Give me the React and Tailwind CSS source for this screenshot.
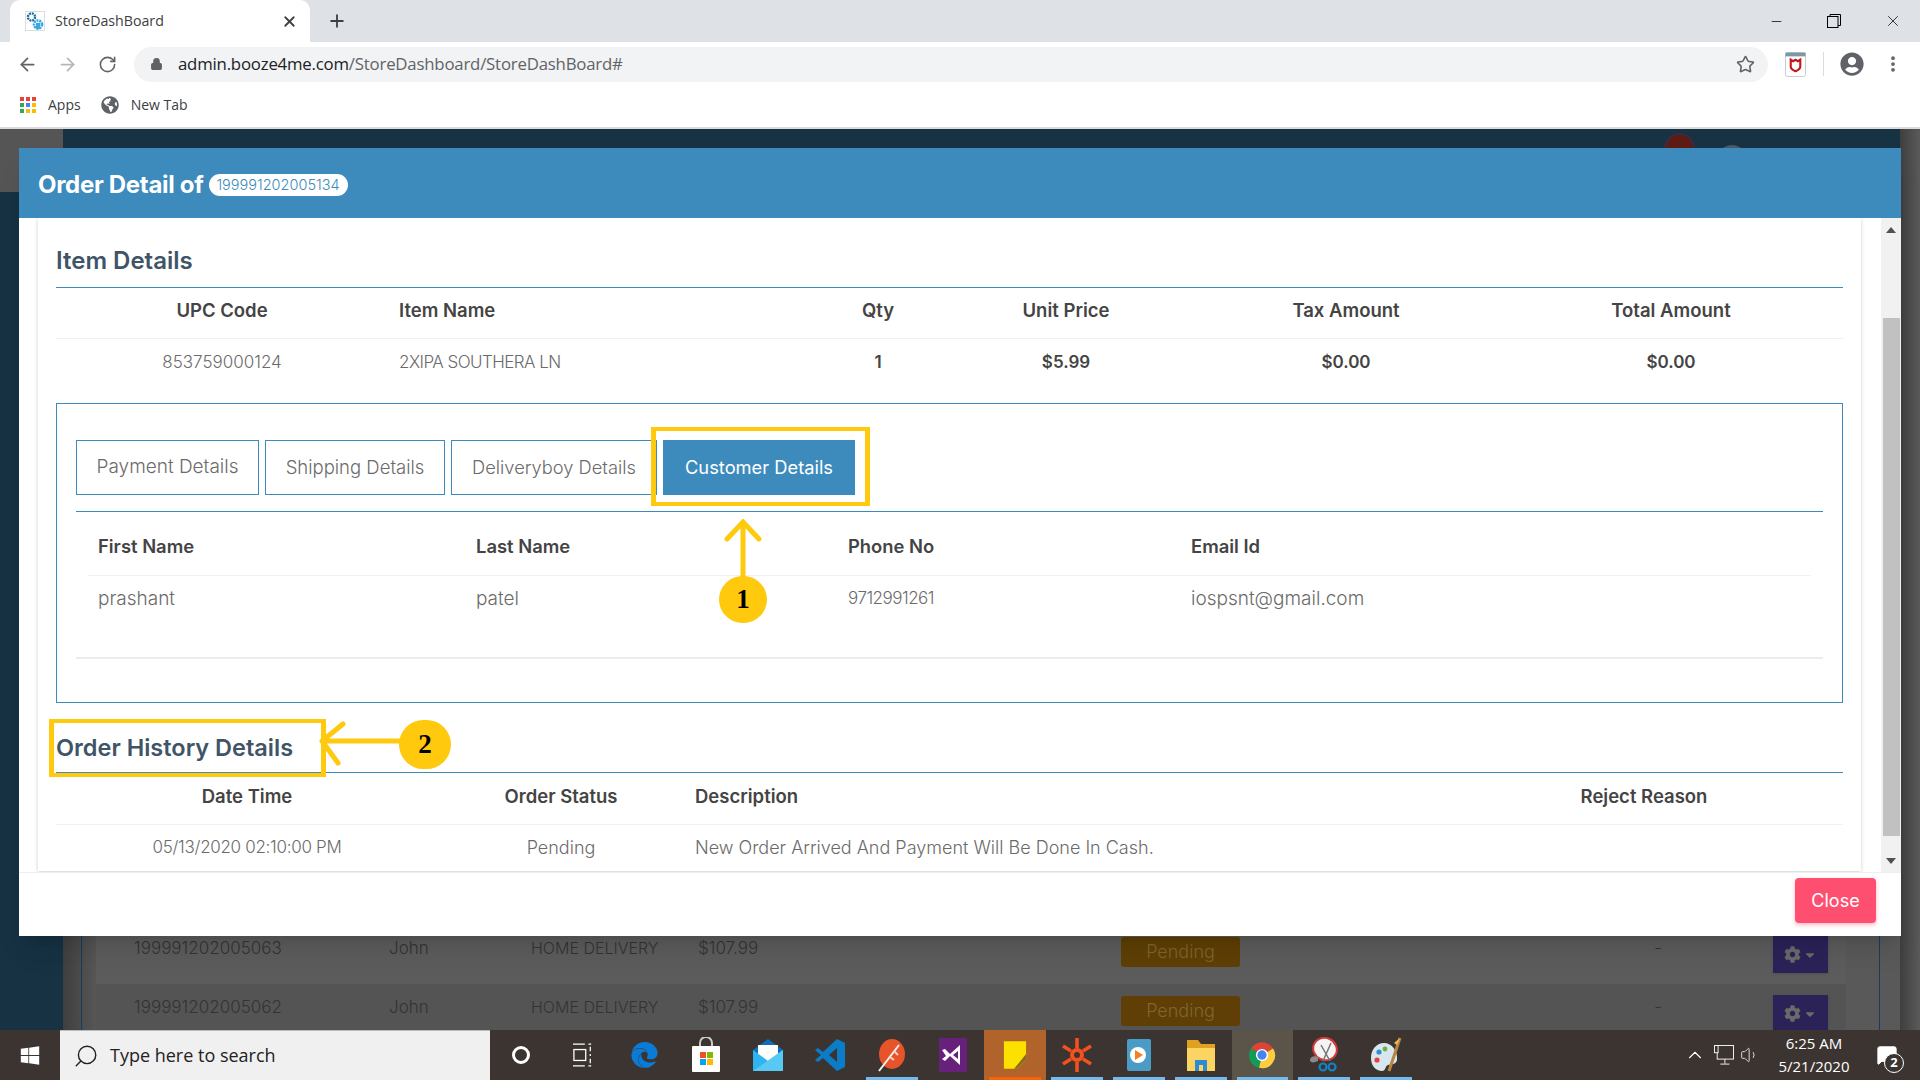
import React from 'react';
import { ArrowLeft, ArrowRight, RotateCw, Lock, Star, EllipsisVertical, X, Plus, Minus, Search, ChevronUp, Volume1, MessageSquare } from 'lucide-react';
import { FaGlobeAmericas, FaUserCircle, FaWindows, FaCog, FaCaretDown, FaEdge } from 'react-icons/fa';

const Favicon = () => (
  <svg viewBox="0 0 20 20" className="w-5 h-5 shrink-0">
    <rect x="0.5" y="0.5" width="19" height="19" fill="#fff" stroke="#ddd" />
    <circle cx="6.5" cy="6" r="3.6" fill="none" stroke="#1f6f9f" strokeWidth="2.4" strokeDasharray="2 0.8" />
    <circle cx="13" cy="13.5" r="4" fill="none" stroke="#38a8e0" strokeWidth="2.6" strokeDasharray="2 0.8" />
    <rect x="11" y="12" width="4" height="6" fill="#38a8e0" />
  </svg>
);

const AppsIcon = () => {
  const colors = ['#ea4335', '#ea4335', '#ea4335', '#34a853', '#4285f4', '#fbbc05', '#34a853', '#fbbc05', '#fbbc05'];
  return (
    <svg viewBox="0 0 16 16" className="w-4 h-4 shrink-0">
      {colors.map((c, i) => (
        <rect key={i} x={(i % 3) * 6} y={Math.floor(i / 3) * 6} width="4" height="4" fill={c} />
      ))}
    </svg>
  );
};

const RestoreIcon = () => (
  <svg viewBox="0 0 14 14" className="w-[14px] h-[14px]" fill="none" stroke="#000" strokeWidth="1">
    <rect x="0.5" y="2.5" width="10.5" height="11" />
    <path d="M3 2.5V0.5H13.5V11.5H11" />
  </svg>
);

const McAfee = () => (
  <svg viewBox="0 0 22 26" className="w-[21px] h-[25px]">
    <rect x="0.5" y="0.5" width="21" height="25" rx="2" fill="#fff" stroke="#c4c9cd" />
    <rect x="0.5" y="0.5" width="21" height="4" fill="#7b98a8" />
    <path d="M6 8l2.5 1.5L11 8l2.5 1.5L16 8v7c0 2.5-2.5 4-5 5-2.5-1-5-2.5-5-5z" fill="none" stroke="#c01818" strokeWidth="2.2" />
  </svg>
);

const StoreIcon = () => (
  <svg viewBox="0 0 30 36" className="w-[30px] h-[36px]">
    <path d="M9 10V6a6 6 0 0 1 12 0v4" fill="none" stroke="#ccc" strokeWidth="2" />
    <rect x="1" y="9" width="28" height="26" rx="1" fill="#fff" />
    <rect x="9" y="15" width="6" height="6" fill="#f25022" />
    <rect x="16" y="15" width="6" height="6" fill="#7fba00" />
    <rect x="9" y="22" width="6" height="6" fill="#00a4ef" />
    <rect x="16" y="22" width="6" height="6" fill="#ffb900" />
  </svg>
);

const MailIcon = () => (
  <svg viewBox="0 0 32 34" className="w-[32px] h-[34px]">
    <path d="M1 12L16 1l15 11v21H1z" fill="#0a6fc2" />
    <rect x="6" y="7" width="20" height="16" fill="#fff" />
    <path d="M1 12l15 11 15-11v21H1z" fill="#2fb4f0" />
    <path d="M1 33l30-21v21z" fill="#58c8f5" />
  </svg>
);

const VsCodeIcon = () => (
  <svg viewBox="0 0 32 34" className="w-[32px] h-[34px]">
    <path d="M23 1l8 4v24l-8 4L9 20l-5 4-3-2 6-5-6-5 3-2 5 4z M23 10l-8 7 8 7z" fill="#0a7cc8" fillRule="evenodd" />
  </svg>
);

const FeatherIcon = () => (
  <svg viewBox="0 0 30 36" className="w-[30px] h-[36px]">
    <ellipse cx="15" cy="17" rx="13" ry="15" fill="#e8542a" />
    <path d="M2 34L22 8" stroke="#f3f3f3" strokeWidth="2" />
    <path d="M17 14l4 4M13 20l4 3" stroke="#f3d0c0" strokeWidth="2" />
  </svg>
);

const VsIcon = () => (
  <svg viewBox="0 0 30 36" className="w-[30px] h-[36px]">
    <rect x="1" y="1" width="28" height="34" fill="#68217a" />
    <path d="M7 12l5 5 10-9v20l-10-9-5 5-3-2 4-3-4-6z M15 18l5 4v-8z" fill="#fff" fillRule="evenodd" />
  </svg>
);

const StickyIcon = () => (
  <svg viewBox="0 0 26 34" className="w-[24px] h-[32px]">
    <path d="M1 2h24v20l-10 10H1z" fill="#fce100" />
    <path d="M25 16v6L15 32h-3z" fill="#8a6a20" />
  </svg>
);

const SpokeIcon = () => (
  <svg viewBox="0 0 34 36" className="w-[34px] h-[36px]">
    <circle cx="17" cy="18" r="7" fill="#f4511e" />
    <circle cx="17" cy="18" r="3" fill="#3c3430" />
    <path d="M17 1v10M17 25v10M3 9l8 5M31 9l-8 5M3 27l8-5M31 27l-8-5" stroke="#f4511e" strokeWidth="3.5" />
  </svg>
);

const MediaIcon = () => (
  <svg viewBox="0 0 26 36" className="w-[26px] h-[36px]">
    <rect x="1" y="2" width="24" height="32" rx="2" fill="#4a9cc7" />
    <circle cx="12" cy="18" r="8" fill="#fff" />
    <path d="M9 13l8 5-8 5z" fill="#f08020" />
  </svg>
);

const FolderIcon = () => (
  <svg viewBox="0 0 30 34" className="w-[30px] h-[34px]">
    <path d="M1 2h11l3 4h14v6H1z" fill="#e0a020" />
    <rect x="1" y="10" width="28" height="23" fill="#fcd462" />
    <path d="M9 33V22h12v11h-4v-6h-4v6z" fill="#2d8bd6" />
  </svg>
);

const ChromeIcon = () => (
  <svg viewBox="0 0 48 48" className="w-[28px] h-[34px]">
    <path d="M24 24L5 13a22 22 0 0 1 38 0z" fill="#db4437" />
    <path d="M24 24L5 13a22 22 0 0 0 14 33z" fill="#0f9d58" />
    <path d="M24 24l-5 22a22 22 0 0 0 24-33z" fill="#ffcd40" />
    <circle cx="24" cy="24" r="10.5" fill="#fff" />
    <circle cx="24" cy="24" r="8" fill="#4285f4" />
  </svg>
);

const SnipIcon = () => (
  <svg viewBox="0 0 30 36" className="w-[30px] h-[36px]">
    <ellipse cx="16" cy="12" rx="12" ry="11" transform="rotate(25 16 12)" fill="#f4f4f4" stroke="#d43a3a" strokeWidth="2" />
    <path d="M9 20c-4-2-8 0-8 3s4 3 8 1z" fill="#8a8a8a" />
    <path d="M12 8l9 16M22 6L14 24" stroke="#777" strokeWidth="1.5" />
    <circle cx="14" cy="30" r="3.5" fill="none" stroke="#1383c8" strokeWidth="2.2" />
    <circle cx="23" cy="30" r="3.5" fill="none" stroke="#1383c8" strokeWidth="2.2" />
  </svg>
);

const PaintIcon = () => (
  <svg viewBox="0 0 32 36" className="w-[32px] h-[36px]">
    <path d="M14 6C6 6 1 13 1 21s5 13 11 13c4 0 3-5 6-6s8 0 9-5C28 14 22 6 14 6z" fill="#d8e6ee" />
    <circle cx="9" cy="15" r="2.6" fill="#2f8fd0" />
    <circle cx="7" cy="23" r="2.6" fill="#e04040" />
    <circle cx="15" cy="12" r="2.4" fill="#70b040" />
    <path d="M30 1L19 34" stroke="#b88440" strokeWidth="3" />
    <path d="M30 1l-3 7-3-2z" fill="#e8b860" />
  </svg>
);

const NetworkIcon = () => (
  <svg viewBox="0 0 22 24" className="w-[20px] h-[22px]" fill="none" stroke="#fff" strokeWidth="1">
    <rect x="3.5" y="1.5" width="18" height="15" />
    <rect x="0.5" y="1.5" width="4" height="8" fill="#3c3430" />
    <path d="M12 16.5v5M7 22h10" />
  </svg>
);

const TaskViewIcon = () => (
  <svg viewBox="0 0 22 26" className="w-[20px] h-[24px]" fill="none" stroke="#fff" strokeWidth="1.4">
    <path d="M0 1h13M17 1h3M0 25h13M17 25h3" />
    <rect x="1" y="7" width="13" height="12" />
    <path d="M19 4v5M19 12v2M19 17v5" />
  </svg>
);

const SectionTitle = ({ children, className }) => (
  <div className={`font-semibold text-[#3f5567] ${className}`}>{children}</div>
);

const Cell = ({ children, className }) => <div className={`flex items-center ${className}`}>{children}</div>;

const tabs = [
  ['Payment Details', 'w-[183px] text-[19px]'],
  ['Shipping Details', 'w-[180px] text-[18.5px]'],
  ['Deliveryboy Details', 'w-[206px] text-[18.3px]'],
];

const BgRow = ({ id, bg }) => (
  <div className={`h-[59px] flex shrink-0 items-start ml-[14px] w-[1750px] text-[#333] text-[17px] font-light ${bg}`}>
    <div className="w-[293px] pl-[38px] pt-[11px]">{id}</div>
    <div className="w-[142px] pt-[11px]">John</div>
    <div className="w-[167px] pt-[11px] text-[16px] whitespace-nowrap">HOME DELIVERY</div>
    <div className="w-[423px] pt-[11px]">$107.99</div>
    <div className="w-[119px] mt-[12px] h-[30px] pb-[2px] rounded-[3px] bg-[#5f3f05] text-[#80662f] text-[18px] flex items-center justify-center">Pending</div>
    <div className="w-[422px] pt-[11px] text-right">-</div>
    <div className="w-[111px]" />
    <div className="w-[55px] h-[37px] mt-[11px] bg-[#2b2358] shadow flex items-center justify-center text-[#6a6a6a]">
      <FaCog className="w-[17px] h-[17px]" />
      <FaCaretDown className="w-[14px] h-[14px] ml-[2px]" />
    </div>
  </div>
);

export default function App() {
  return (
    <div className="relative w-[1920px] h-[1080px] overflow-hidden flex flex-col bg-white font-['Inter',sans-serif] text-[#6b6b6b]">
      {/* browser chrome */}
      <div className="h-[42px] bg-[#dee1e6] flex shrink-0 font-['Open_Sans',sans-serif]">
        <div className="ml-[10px] w-[300px] bg-white rounded-t-[10px] flex items-center pl-[15px] pr-[12px] mt-0">
          <Favicon />
          <span className="ml-[10px] text-[14.2px] text-[#3c4043] flex-1">StoreDashBoard</span>
          <X className="w-[17px] h-[17px] text-[#3c4043]" strokeWidth={2.5} />
        </div>
        <div className="ml-[17px] flex items-center">
          <Plus className="w-[20px] h-[20px] text-[#3c4043]" strokeWidth={2.2} />
        </div>
        <div className="ml-auto flex items-center gap-[43px] pr-[18px]">
          <Minus className="w-[15px] h-[15px] text-black" strokeWidth={1.2} />
          <RestoreIcon />
          <X className="w-[18px] h-[18px] text-black" strokeWidth={1} />
        </div>
      </div>
      <div className="h-[44px] flex items-center shrink-0 font-['Open_Sans',sans-serif] pl-[17px]">
        <ArrowLeft className="w-[21px] h-[21px] text-[#5f6368]" strokeWidth={2} />
        <ArrowRight className="w-[21px] h-[21px] text-[#b4b6b8] ml-[19px]" strokeWidth={2} />
        <RotateCw className="w-[19px] h-[19px] text-[#5f6368] ml-[20px]" strokeWidth={2} />
        <div className="ml-[17px] w-[1634px] h-[35px] rounded-full bg-[#f1f3f4] flex items-center pl-[16px] pr-[13px]">
          <Lock className="w-[13px] h-[14px] text-[#5f6368]" fill="#5f6368" strokeWidth={2} />
          <span className="ml-[15px] text-[16.8px] text-[#202124] tracking-[-0.2px]">
            admin.booze4me.com<span className="text-[#5f6368]">/StoreDashboard/StoreDashBoard#</span>
          </span>
          <Star className="w-[19px] h-[19px] text-[#5f6368] ml-auto" strokeWidth={2} />
        </div>
        <div className="ml-[17px]"><McAfee /></div>
        <div className="ml-[17px] w-px h-[24px] bg-[#dadce0]" />
        <FaUserCircle className="ml-[16px] w-[24px] h-[24px] text-[#5f6368]" />
        <EllipsisVertical className="ml-[19px] w-[20px] h-[20px] text-[#5f6368]" strokeWidth={2.5} />
      </div>
      <div className="h-[41px] flex items-center shrink-0 pl-[20px] pb-[4px] font-['Open_Sans',sans-serif] text-[14px] text-[#3c4043]">
        <AppsIcon />
        <span className="ml-[12px]">Apps</span>
        <FaGlobeAmericas className="ml-[20px] w-[18px] h-[18px] text-[#5f6368]" />
        <span className="ml-[12px]">New Tab</span>
      </div>
      <div className="h-[2px] bg-[#dadce0] shrink-0" />

      {/* dimmed page behind the modal */}
      <div className="flex-1 flex overflow-hidden bg-[#163243] relative">
        <div className="w-[63px] shrink-0">
          <div className="h-[63px] bg-[#555]" />
        </div>
        <div className="flex-1 flex flex-col">
          <div className="h-[60px] bg-[#163243] relative shrink-0">
            <div className="absolute left-[1601px] top-[4px] w-[31px] h-[31px] rounded-full bg-[#5e1b14] border-2 border-[#3c2a44]" />
            <div className="absolute left-[1655px] top-[16px] w-[28px] h-[28px] rounded-full bg-[#4a5a66]" />
          </div>
          <div className="flex-1 bg-gradient-to-r from-[#3f3f3f] via-[#595959] via-[2%] to-[#595959] flex flex-col overflow-hidden">
            <div className="ml-[18px] mr-[20px] flex-1 border-x border-[#173d5e] overflow-hidden flex flex-col">
              <div className="h-[736px] shrink-0" />
              <BgRow id="199991202005063" bg="bg-[#5c5c5c]" />
              <BgRow id="199991202005062" bg="bg-[#545454]" />
            </div>
          </div>
        </div>
        <div className="w-[20px] shrink-0 bg-gradient-to-r from-[#3f3f3f] to-[#5a5a5a]" />

        {/* modal */}
        <div className="absolute left-[19px] top-[19px] w-[1882px] h-[788px] bg-white flex flex-col shadow-xl">
          <div className="h-[70px] bg-[#3d8bbc] flex items-center pl-[19px] pt-[3px] shrink-0">
            <span className="text-white font-bold text-[24px] tracking-[-0.3px]">Order Detail of</span>
            <span className="ml-[5px] mt-[1px] h-[22px] w-[139px] rounded-full bg-white text-[#3d8bbc] text-[14.5px] font-light flex items-center justify-center">199991202005134</span>
          </div>
          <div className="h-[655px] flex border-b border-[#eee] shrink-0">
            <div className="flex-1 pl-[19px] pr-[20px] overflow-hidden">
              <div className="h-[653px] shadow-[0_1px_4px_rgba(0,0,0,0.2)] px-[18px]">
                <SectionTitle className="h-[70px] pt-[25px] text-[24px] border-b border-[#3d8bbc]">Item Details</SectionTitle>
                <div className="grid grid-cols-[332px_429px_122px_254px_306px_344px] h-[51px] pb-[5px] font-semibold text-[#444] text-[18.5px] border-b border-[#f0f0f0]">
                  <Cell className="justify-center">UPC Code</Cell>
                  <Cell className="pl-[11px]">Item Name</Cell>
                  <Cell className="justify-center">Qty</Cell>
                  <Cell className="justify-center">Unit Price</Cell>
                  <Cell className="justify-center">Tax Amount</Cell>
                  <Cell className="justify-center">Total Amount</Cell>
                </div>
                <div className="grid grid-cols-[332px_429px_122px_254px_306px_344px] h-[47px] text-[17px] font-light">
                  <Cell className="justify-center">853759000124</Cell>
                  <Cell className="pl-[11px] tracking-[-0.55px]">2XIPA SOUTHERA LN</Cell>
                  <Cell className="justify-center font-semibold text-[#444]">1</Cell>
                  <Cell className="justify-center font-semibold text-[#444]">$5.99</Cell>
                  <Cell className="justify-center font-semibold text-[#444]">$0.00</Cell>
                  <Cell className="justify-center font-semibold text-[#444]">$0.00</Cell>
                </div>

                <div className="mt-[17px] h-[300px] border border-[#3d8bbc] px-[19px] pt-[36px]">
                  <div className="flex gap-[6px] h-[55px] font-light">
                    {tabs.map(([label, width]) => (
                      <div key={label} className={`${width} border border-[#3d8bbc] flex items-center justify-center`}>{label}</div>
                    ))}
                    <div className="w-[192px] border border-[#3d8bbc] bg-[#3d8bbc] text-white text-[18.3px] font-normal flex items-center justify-center">Customer Details</div>
                  </div>
                  <div className="mt-[16px] border-t border-[#3d8bbc] h-[148px] border-b-2 border-b-[#ececec] px-[12px]">
                    <div className="grid grid-cols-[378px_372px_343px_1fr] h-[64px] pt-[6px] pl-[10px] font-semibold text-[#444] text-[18.4px] border-b border-[#f0f0f0]">
                      <Cell>First Name</Cell>
                      <Cell>Last Name</Cell>
                      <Cell>Phone No</Cell>
                      <Cell>Email Id</Cell>
                    </div>
                    <div className="grid grid-cols-[378px_372px_343px_1fr] h-[46px] pl-[10px] text-[19px] font-light">
                      <Cell>prashant</Cell>
                      <Cell>patel</Cell>
                      <Cell className="text-[17px] tracking-[-0.5px]">9712991261</Cell>
                      <Cell>iospsnt@gmail.com</Cell>
                    </div>
                  </div>
                </div>

                <SectionTitle className="h-[70px] pt-[27px] text-[23.5px] border-b border-[#3d8bbc]">Order History Details</SectionTitle>
                <div className="grid grid-cols-[382px_246px_761px_398px] h-[52px] pb-[4px] font-semibold text-[#444] text-[18.5px] border-b border-[#f0f0f0]">
                  <Cell className="justify-center">Date Time</Cell>
                  <Cell className="justify-center">Order Status</Cell>
                  <Cell className="pl-[11px]">Description</Cell>
                  <Cell className="justify-center">Reject Reason</Cell>
                </div>
                <div className="grid grid-cols-[382px_246px_761px_398px] h-[45px] text-[18px] font-light">
                  <Cell className="justify-center text-[17px] tracking-[-0.3px]">05/13/2020 02:10:00 PM</Cell>
                  <Cell className="justify-center">Pending</Cell>
                  <Cell className="pl-[11px]">New Order Arrived And Payment Will Be Done In Cash.</Cell>
                  <div />
                </div>
              </div>
            </div>
            <div className="w-[20px] bg-[#f1f1f1] flex flex-col items-center shrink-0">
              <div className="h-[20px] shrink-0 flex items-center justify-center mt-[2px]">
                <div className="w-0 h-0 border-x-[5px] border-x-transparent border-b-[6px] border-b-[#505050]" />
              </div>
              <div className="mt-[78px] w-[17px] h-[518px] shrink-0 bg-[#c1c1c1]" />
              <div className="mt-[22px] w-0 h-0 shrink-0 border-x-[5px] border-x-transparent border-t-[6px] border-t-[#505050]" />
            </div>
          </div>
          <div className="flex-1 flex justify-end items-start pt-[5px] pr-[25px]">
            <button className="w-[81px] h-[45px] rounded-[4px] bg-[#ff4f70] text-white text-[18px] shadow-[0_2px_4px_rgba(255,79,112,0.4)]">Close</button>
          </div>
        </div>
      </div>

      {/* annotations drawn over the modal */}
      <div className="absolute left-[651px] top-[427px] w-[219px] h-[79px] border-x-[5px] border-y-[4px] border-[#ffc90e]" />
      <div className="absolute left-[49px] top-[719px] w-[277px] h-[58px] border-x-[5px] border-y-[4px] border-[#ffc90e]" />
      <svg viewBox="0 0 40 60" className="absolute left-[723px] top-[519px] w-[40px] h-[60px]" fill="none" stroke="#ffc90e" strokeWidth="5" strokeLinecap="round">
        <path d="M20 3V60M4 20L20 3l16 17" />
      </svg>
      <svg viewBox="0 0 90 60" className="absolute left-[318px] top-[719px] w-[90px] h-[60px]" fill="none" stroke="#ffc90e" strokeWidth="5" strokeLinecap="round">
        <path d="M4 22H90M4 22L25 5M4 22L20 44" />
      </svg>
      <div className="absolute left-[719px] top-[576px] w-[48px] h-[47px] rounded-full bg-[#ffc90e] flex items-center justify-center font-['Liberation_Serif',serif] font-bold text-black text-[27px]">1</div>
      <div className="absolute left-[399px] top-[720px] w-[52px] h-[49px] rounded-full bg-[#ffc90e] flex items-center justify-center font-['Liberation_Serif',serif] font-bold text-black text-[27px]">2</div>

      {/* windows taskbar */}
      <div className="h-[50px] absolute left-0 right-0 bottom-0 bg-[#3c3430] flex items-center text-white">
        <div className="w-[60px] flex justify-center"><FaWindows className="w-[20px] h-[21px]" /></div>
        <div className="w-[430px] h-[50px] bg-[#f0f0f0] border-t border-[#bbb] flex items-center pl-[13px] font-['Open_Sans',sans-serif] text-[#222] text-[18px]">
          <Search className="w-[26px] h-[26px] -scale-x-100 text-[#222]" strokeWidth={1.3} />
          <span className="ml-[11px]">Type here to search</span>
        </div>
        <div className="flex items-center h-[50px]">
          {[
            [<div className="w-[18px] h-[18px] rounded-full border-[3px] border-white" />, '', ''],
            [<TaskViewIcon />, '', ''],
            [<FaEdge className="w-[27px] h-[30px] text-[#0a7bd7]" />, '', ''],
            [<StoreIcon />, '', ''],
            [<MailIcon />, '', ''],
            [<VsCodeIcon />, '', ''],
            [<FeatherIcon />, '', 'bg-[#76b9ed]'],
            [<VsIcon />, '', ''],
            [<StickyIcon />, 'bg-[#b0642c]', 'bg-[#f7630c]'],
            [<SpokeIcon />, '', 'bg-[#76b9ed]'],
            [<MediaIcon />, '', 'bg-[#76b9ed]'],
            [<FolderIcon />, '', 'bg-[#76b9ed]'],
            [<ChromeIcon />, 'bg-[#5a5548]', 'bg-[#76b9ed]'],
            [<SnipIcon />, '', 'bg-[#76b9ed]'],
            [<PaintIcon />, '', 'bg-[#76b9ed]'],
          ].map(([icon, bg, bar], i) => (
            <div key={i} className={`relative w-[61.8px] h-[50px] flex items-center justify-center ${bg}`}>
              {icon}
              {bar && <div className={`absolute left-[5px] right-[5px] bottom-0 h-[3px] ${bar}`} />}
            </div>
          ))}
        </div>
        <div className="ml-auto flex items-center h-[50px] font-['Open_Sans',sans-serif]">
          <ChevronUp className="w-[22px] h-[22px]" strokeWidth={1.2} />
          <div className="ml-[8px]"><NetworkIcon /></div>
          <Volume1 className="ml-[6px] w-[20px] h-[20px] text-[#ddd]" strokeWidth={1.2} />
          <div className="ml-[10px] w-[88px] text-center text-[15px] leading-[23px]">
            <div>6:25 AM</div>
            <div>5/21/2020</div>
          </div>
          <div className="relative ml-[14px] mr-[18px] w-[30px] h-[30px] flex items-center justify-center">
            <MessageSquare className="w-[22px] h-[24px]" fill="#fff" strokeWidth={1} />
            <div className="absolute right-[-2px] bottom-[-3px] w-[20px] h-[20px] rounded-full border border-white bg-[#3c3430] text-[13px] font-bold flex items-center justify-center">2</div>
          </div>
        </div>
      </div>
    </div>
  );
}
